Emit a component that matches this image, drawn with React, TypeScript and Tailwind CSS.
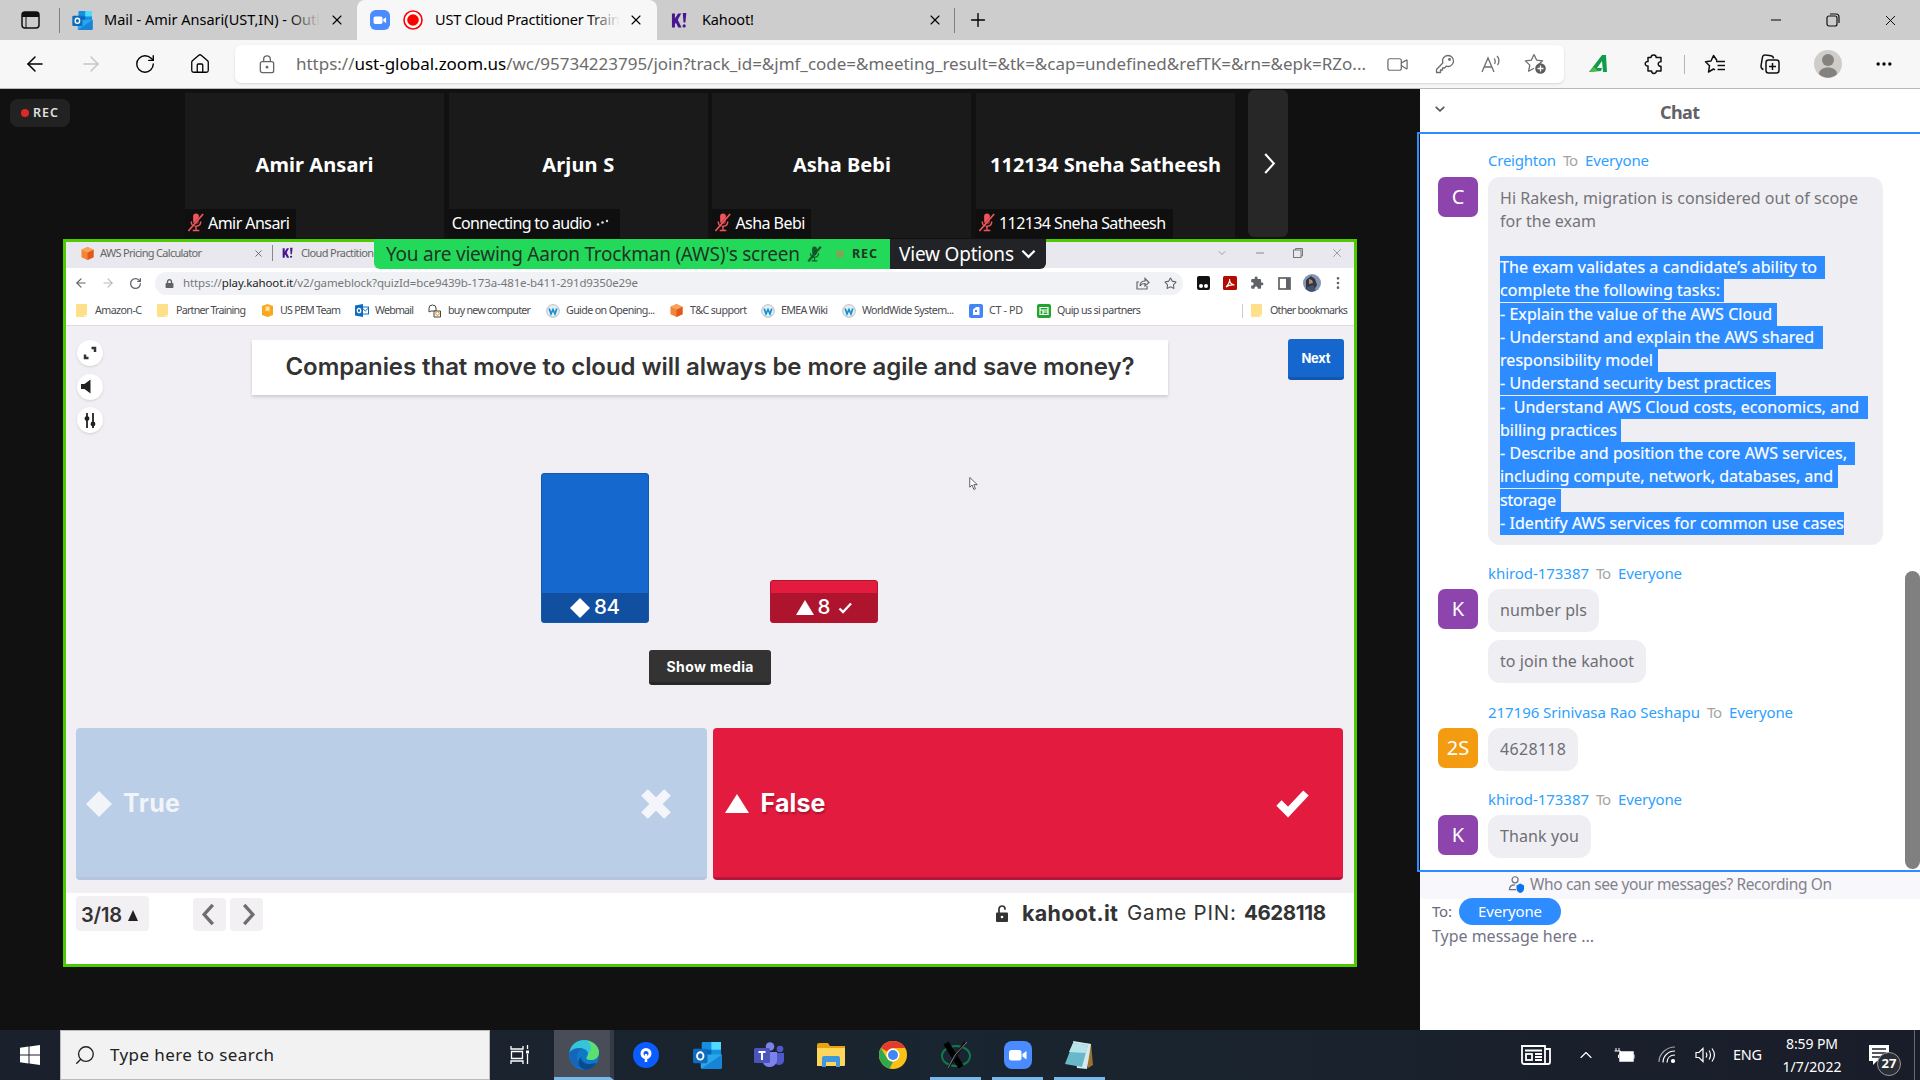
import React, { useLayoutEffect, useRef, useState } from "react";
import {
  ArrowLeft, ArrowRight, RotateCw, Home, Plus, X, Minus, Video, ChevronDown, ChevronUp,
  MoreHorizontal, MoreVertical, Star, Search,
} from "lucide-react";
import { FaLock } from "react-icons/fa";
import { MdExtension } from "react-icons/md";

const NOTO = "font-['Noto_Sans','Open_Sans',sans-serif]";
const GEO = "font-['Inter','Noto_Sans',sans-serif]";

/* Single line of text whose tracking is adjusted so that it spans `w` pixels. */
function Fit({ w, className = "", children }: { w: number; className?: string; children: React.ReactNode }) {
  const ref = useRef<HTMLSpanElement>(null);
  const [spacing, setSpacing] = useState(0);
  useLayoutEffect(() => {
    const el = ref.current;
    if (!el) return;
    const count = Math.max(1, (el.textContent || "").length - 1);
    el.style.letterSpacing = "0px";
    const next = (w - el.getBoundingClientRect().width) / count;
    el.style.letterSpacing = next + "px";
    setSpacing(next);
  }, [w]);
  return (
    <span className={`block shrink-0 ${className}`} style={{ width: w }}>
      <span ref={ref} className="inline-block whitespace-pre" style={{ letterSpacing: spacing }}>{children}</span>
    </span>
  );
}

const OutlookIcon = ({ className = "" }: { className?: string }) => (
  <svg viewBox="0 0 30 28" className={`shrink-0 ${className}`}>
    <rect x="9" y="0" width="20" height="15" rx="1.5" fill="#1490df" />
    <rect x="19" y="0" width="10" height="8" fill="#50d9ff" />
    <rect x="9" y="8" width="10" height="8" fill="#0364b8" />
    <path d="M8 13h22v13a2 2 0 0 1-2 2H10a2 2 0 0 1-2-2z" fill="#28a8ea" />
    <path d="M8 28L30 13v13a2 2 0 0 1-2 2z" fill="#1784d8" />
    <rect x="0" y="7" width="15" height="15" rx="1.5" fill="#0f6cbd" />
    <ellipse cx="7.5" cy="14.5" rx="3.3" ry="3.8" fill="none" stroke="#fff" strokeWidth="2" />
  </svg>
);
const ZoomIcon = ({ className = "" }: { className?: string }) => (
  <svg viewBox="0 0 28 28" className={`shrink-0 ${className}`}>
    <rect width="28" height="28" rx="8" fill="#4a8cff" />
    <rect x="5" y="9" width="12.500" height="10.500" rx="2.500" fill="#fff" />
    <path d="M18.500 13l4-3v8.500l-4-3z" fill="#fff" />
  </svg>
);
const KahootK = ({ className = "" }: { className?: string }) => (
  <svg viewBox="0 0 17 18" className={`shrink-0 ${className}`}>
    <path d="M1 1.500h3.200v5.500l3.300-5.500h3.400L7.200 8.300l4 8.200H7.700L5.200 11.500l-1 1.500v3.500H1z" fill="#46178f" />
    <path d="M12.500 1h3.800l-1 10h-2z" fill="#46178f" />
    <circle cx="14" cy="14.800" r="1.700" fill="#46178f" />
  </svg>
);
const Cube = ({ className = "" }: { className?: string }) => (
  <svg viewBox="0 0 14 14" className={`shrink-0 ${className}`}>
    <path d="M7 0l6.500 3v8L7 14 .5 11V3z" fill="#f58536" />
    <path d="M7 6v8l6.500-3V3z" fill="#e0591b" />
    <path d="M7 0l6.500 3L7 6 .5 3z" fill="#f9a35a" />
  </svg>
);
const Folder = ({ className = "" }: { className?: string }) => (
  <svg viewBox="0 0 11 13" className={`shrink-0 ${className}`}>
    <path d="M0 1a1 1 0 0 1 1-1h9a1 1 0 0 1 1 1v12H1a1 1 0 0 1-1-1z" fill="#ffe08a" />
    <path d="M9 11h2v2H8z" fill="#fff3cd" />
  </svg>
);
const Box = ({ className = "" }: { className?: string }) => (
  <svg viewBox="0 0 13 13" className={`shrink-0 ${className}`}>
    <path d="M1 2l5.500-2L12 2v9l-5.500 2L1 11z" fill="#f7a81b" />
    <path d="M4.500 2.500h4v5l-2-1-2 1z" fill="#ffe2a6" />
  </svg>
);
const WikiW = ({ className = "" }: { className?: string }) => (
  <svg viewBox="0 0 14 14" className={`shrink-0 ${className}`}>
    <circle cx="7" cy="7" r="6.300" fill="#e8eef2" stroke="#b5bcc2" />
    <path d="M3.200 4.500l1.800 5.500 2-4.500 2 4.500 1.800-5.500" fill="none" stroke="#1390cf" strokeWidth="1.700" />
  </svg>
);
const WebmailIcon = ({ className = "" }: { className?: string }) => (
  <svg viewBox="0 0 14 13" className={`shrink-0 ${className}`}>
    <rect x="7" y="3" width="6.500" height="7" fill="#fff" stroke="#0f6cbd" />
    <path d="M7 4l3.300 3L13.500 4" fill="none" stroke="#0f6cbd" />
    <path d="M0 1.500L8 0v13l-8-1.500z" fill="#0f6cbd" />
    <ellipse cx="4" cy="6.500" rx="1.700" ry="2.200" fill="none" stroke="#fff" strokeWidth="1.300" />
  </svg>
);
const ShopIcon = ({ className = "" }: { className?: string }) => (
  <svg viewBox="0 0 14 14" className={`shrink-0 ${className}`} fill="none" stroke="#444">
    <path d="M1 4a3.500 3 0 0 1 7 0v3H3l-2 1z" />
    <path d="M6 7h6.500v6H6z" fill="#fff" />
    <circle cx="9.500" cy="9.500" r="1.800" stroke="#e58a1f" />
  </svg>
);
const DocIcon = ({ className = "" }: { className?: string }) => (
  <svg viewBox="0 0 14 14" className={`shrink-0 ${className}`}>
    <rect width="14" height="14" rx="2" fill="#4285f4" />
    <path d="M4 5.500L7 3h3.500v8H4z" fill="#fff" /><path d="M6 6h2v2H6z" fill="#4285f4" />
  </svg>
);
const SheetIcon = ({ className = "" }: { className?: string }) => (
  <svg viewBox="0 0 14 14" className={`shrink-0 ${className}`}>
    <rect width="14" height="14" rx="2" fill="#22a52f" />
    <path d="M3 3.500h8v7H3zM3 6h8M6 6v4.500M6 8h5" fill="none" stroke="#fff" strokeWidth="1.200" />
  </svg>
);
const MutedMic = ({ className = "", color = "#f0555a" }: { className?: string; color?: string }) => (
  <svg viewBox="0 0 18 20" className={`shrink-0 ${className}`}>
    <rect x="6" y="0.500" width="6" height="11" rx="3" fill={color} />
    <path d="M4 9c0 3 2 5 5 5s5-2 5-5M9 14v4M5.500 18.500h7" fill="none" stroke={color} strokeWidth="1.500" />
    <path d="M17 1L1.500 19" stroke="#151515" strokeWidth="3" opacity="0.500" />
    <path d="M16.500 1L1 19" stroke={color} strokeWidth="1.800" />
  </svg>
);

function BrowserTabs() {
  return (
    <div className="flex h-10 items-center bg-[#cdcdcd] text-black">
      <svg viewBox="0 0 19 18" className="ml-[21px] h-[18px] w-[19px] shrink-0">
        <rect x="1" y="1" width="17" height="16" rx="3" fill="none" stroke="#111" strokeWidth="1.500" />
        <path d="M1 6V3a2 2 0 0 1 2-2h13a2 2 0 0 1 2 2v3z" fill="#111" />
        <path d="M5 6v11" stroke="#111" />
      </svg>
      <div className="ml-[19px] h-[25px] w-px bg-[#808080]" />
      <OutlookIcon className="ml-3 h-[19px] w-[21px]" />
      <div className="relative ml-[11px] w-[216px] shrink-0 overflow-hidden">
        <Fit w={216} className="text-[14.500px]">Mail - Amir Ansari(UST,IN) - Outl</Fit>
        <div className="absolute inset-y-0 right-0 w-8 bg-linear-to-r from-transparent to-[#cdcdcd]" />
      </div>
      <X className="ml-[9px] size-4 shrink-0" strokeWidth={1.7} />
      <div className="ml-3 flex h-full w-[300px] shrink-0 items-center rounded-t-lg bg-[#f7f7f7]">
        <ZoomIcon className="ml-[13px] size-5" />
        <svg viewBox="0 0 20 20" className="ml-[13px] size-5 shrink-0">
          <circle cx="10" cy="10" r="9" fill="#fff" stroke="#f00" strokeWidth="1.600" />
          <circle cx="10" cy="10" r="5.800" fill="#f00" />
        </svg>
        <div className="relative ml-3 w-[185px] shrink-0 overflow-hidden">
          <Fit w={185} className="text-[14.500px]">UST Cloud Practitioner Train</Fit>
          <div className="absolute inset-y-0 right-0 w-8 bg-linear-to-r from-transparent to-[#f7f7f7]" />
        </div>
        <X className="ml-2 size-4 shrink-0" strokeWidth={1.7} />
      </div>
      <KahootK className="ml-[14px] h-[17px] w-4" />
      <Fit w={52} className="ml-[15px] text-[14.500px]">Kahoot!</Fit>
      <X className="ml-[173px] size-4 shrink-0" strokeWidth={1.7} />
      <div className="ml-[11px] h-[25px] w-px bg-[#808080]" />
      <Plus className="ml-[12px] size-[22px]" strokeWidth={1.5} />
      <div className="ml-auto mr-[21px] flex items-center gap-[41px]">
        <Minus className="size-4" strokeWidth={1.5} />
        <svg viewBox="0 0 16 16" className="size-4" fill="none" stroke="#111" strokeWidth="1.200">
          <rect x="2" y="4" width="10" height="10" rx="2" /><path d="M5 2h6a3 3 0 0 1 3 3v6" />
        </svg>
        <X className="size-[17px]" strokeWidth={1.3} />
      </div>
    </div>
  );
}

function AddressBar() {
  return (
    <div className="flex h-[49px] items-center border-b border-[#b9b9b9] bg-[#f7f7f7]">
      <ArrowLeft className="ml-[23px] size-6" strokeWidth={1.5} />
      <ArrowRight className="ml-8 size-6 text-[#c6c6c6]" strokeWidth={1.5} />
      <RotateCw className="ml-[31px] size-[22px]" strokeWidth={1.5} />
      <Home className="ml-[33px] size-[22px]" strokeWidth={1.4} />
      <div className="ml-[24px] flex h-[38px] w-[1329px] shrink-0 items-center rounded-md bg-white text-[#6c6c6c] shadow-sm">
        <svg viewBox="0 0 16 20" className="ml-[24px] h-[19px] w-4 shrink-0" fill="none" stroke="#666" strokeWidth="1.400">
          <rect x="1" y="7" width="14" height="11.500" rx="2" /><path d="M4.500 7V4.500a3.500 3.500 0 0 1 7 0V7" /><circle cx="8" cy="12.800" r="0.800" fill="#555" />
        </svg>
        <Fit w={1070} className="ml-[21px] text-[17px]">https://<span className="text-black">ust-global.zoom.us</span>/wc/95734223795/join?track_id=&amp;jmf_code=&amp;meeting_result=&amp;tk=&amp;cap=undefined&amp;refTK=&amp;rn=&amp;epk=RZo...</Fit>
        <Video className="ml-[20px] size-[23px] shrink-0" strokeWidth={1.3} />
        <svg viewBox="0 0 20 20" className="ml-[26px] size-5 shrink-0" fill="none" stroke="#6c6c6c" strokeWidth="1.300" strokeLinejoin="round">
          <path d="M13 1.500a5.500 5.500 0 1 1-1.800 10.700L9.500 14H7.500v2H5.500v2.500h-4V15.500L7.800 9A5.500 5.500 0 0 1 13 1.500z" /><circle cx="14.500" cy="5.500" r="0.800" fill="#6c6c6c" />
        </svg>
        <svg viewBox="0 0 22 20" className="ml-[25px] h-5 w-[22px] shrink-0" fill="none" stroke="#6c6c6c" strokeWidth="1.300">
          <path d="M2 18L8 4l6 14M4.500 13h7M14 4.500c1.500 1 1.500 4 .5 5.500M17 2c2.500 2.500 2.500 6.500.5 9" />
        </svg>
        <svg viewBox="0 0 23 22" className="ml-[22px] h-[22px] w-[23px] shrink-0" fill="none" stroke="#6c6c6c" strokeWidth="1.300">
          <path d="M10 1.500l2.600 5.600 6 .7-4.500 4.100M10 1.500L7.400 7.100l-6 .8 4.400 4.200-1.200 6.100L10 15.200" strokeLinejoin="round" />
          <circle cx="16.500" cy="15.500" r="5.300" fill="#5c5c5c" stroke="none" /><path d="M16.500 12.500v6M13.500 15.500h6" stroke="#fff" />
        </svg>
      </div>
      <svg viewBox="0 0 20 20" className="ml-[24px] h-5 w-5 shrink-0">
        <path d="M1 18L14 1l4 0 1 17h-4l-1-11-5 7h5l-1 3z" fill="#109c4a" /><path d="M1 18l5-5 4 4z" fill="#56b947" />
      </svg>
      <svg viewBox="0 0 22 22" className="ml-[36px] size-[22px] shrink-0" fill="none" stroke="#111" strokeWidth="1.500" strokeLinejoin="round">
        <path d="M7 4.500a2.600 2.600 0 0 1 5.200 0H17v4.300a2.300 2.300 0 1 0 0 4.500V18h-4.600a2.400 2.400 0 1 1-4.800 0H4v-5a2.300 2.300 0 1 1 0-4.500v-4z" />
      </svg>
      <div className="ml-[18px] h-[19px] w-px bg-[#b5b5b5]" />
      <svg viewBox="0 0 22 20" className="ml-[19px] h-5 w-[22px] shrink-0" fill="none" stroke="#111" strokeWidth="1.500" strokeLinejoin="round">
        <path d="M13 6.500L9.500 1.500 7 7l-5.500.8 4 4L4.500 18 9.500 15l1.500.8M12 7.500h9M13.500 11.500H21M13.500 15.500H21" />
      </svg>
      <svg viewBox="0 0 22 22" className="ml-[33px] size-[22px] shrink-0" fill="none" stroke="#111" strokeWidth="1.500">
        <rect x="7" y="7" width="13" height="13" rx="2.500" /><path d="M13.500 10v7M10 13.500h7M4.500 16.500c-2-.5-2.500-2-2.500-3.500L3.500 4A2.500 2.500 0 0 1 6.500 2l5.500.8c1.500.3 2.500 1.500 2.500 2.700" />
      </svg>
      <svg viewBox="0 0 28 28" className="ml-[33px] size-7 shrink-0">
        <circle cx="14" cy="14" r="14" fill="#cfcdca" /><circle cx="14" cy="10" r="6" fill="#85817e" /><path d="M5 24c0-4 4-6.500 9-6.500s9 2.500 9 6.500c-5 5-13 5-18 0z" fill="#85817e" />
      </svg>
      <MoreHorizontal className="ml-[32px] size-5" strokeWidth={2} />
    </div>
  );
}

function Tile({ name, w, label, labelW, labelBox, muted = true }: { name: string; w: number; label: string; labelW: number; labelBox: string; muted?: boolean }) {
  return (
    <div className="flex h-[145px] w-[259px] shrink-0 flex-col bg-[#1a1a1a] text-white">
      <div className="flex h-[116px] items-end justify-center pb-[29px]">
        <Fit w={w} className="text-[20px] leading-[30px] font-bold">{name}</Fit>
      </div>
      <div className={`flex h-[29px] items-center bg-[#0f0f0f] pb-0.5 ${labelBox}`}>
        {muted ? <MutedMic className="mr-[3px] ml-0.5 h-[19px] w-[18px]" /> : <span className="w-[3px]" />}
        <Fit w={labelW} className="text-[16px]">{label}</Fit>
        {!muted && (
          <svg viewBox="0 0 14 8" className="ml-1 h-2 w-3.5" fill="#ddd"><circle cx="2" cy="5.500" r="1.300" /><circle cx="6.500" cy="3.500" r="1.300" /><circle cx="11" cy="2" r="1.200" /></svg>
        )}
      </div>
    </div>
  );
}

function Participants() {
  return (
    <div className="flex h-[150px] items-start">
      <div className="mt-[10px] ml-[10px] flex h-7 w-[60px] shrink-0 items-center rounded-lg bg-[#222] pl-[11px] text-[#e0e0e0]">
        <span className="mr-1 size-2 rounded-full bg-[#e02828]" />
        <Fit w={25} className="text-[12.500px] font-semibold">REC</Fit>
      </div>
      <div className="mt-1 ml-[115px] flex gap-[4.700px]">
        <Tile name="Amir Ansari" w={118} label="Amir Ansari" labelW={82} labelBox="w-[111px]" />
        <Tile name="Arjun S" w={72} label="Connecting to audio" labelW={140} labelBox="w-[171px]" muted={false} />
        <Tile name="Asha Bebi" w={98} label="Asha Bebi" labelW={70} labelBox="w-[99px]" />
        <Tile name="112134 Sneha Satheesh" w={231} label="112134 Sneha Satheesh" labelW={167} labelBox="w-[197px]" />
      </div>
      <div className="mt-px ml-[13px] flex h-[147px] w-10 items-center justify-center rounded-md bg-[#272727] text-white">
        <svg viewBox="0 0 12 22" className="ml-1 h-[21px] w-3"><path d="M1 1l9 10-9 10" fill="none" stroke="#fff" strokeWidth="2.200" /></svg>
      </div>
    </div>
  );
}

function SharedChrome() {
  return (
    <>
      <div className="flex h-[26px] items-center bg-[#e8e8ee] pb-1 text-[#666]">
        <Cube className="ml-[15px] h-[13px] w-[13px]" />
        <Fit w={102} className="ml-[6px] text-[11px]">AWS Pricing Calculator</Fit>
        <X className="ml-[51px] size-[11px] shrink-0" />
        <div className="ml-2 h-4 w-px bg-[#888]" />
        <KahootK className="ml-[9px] h-3 w-[11px]" />
        <Fit w={73} className="ml-[8px] text-[11px]">Cloud Practition</Fit>
        <div className="ml-auto mr-[10px] flex items-center gap-[26px] text-[#888]">
          <ChevronDown className="size-3" strokeWidth={1.5} />
          <Minus className="size-3" />
          <svg viewBox="0 0 12 12" className="size-3" fill="none" stroke="#777"><rect x="1.500" y="3" width="7.500" height="7.500" /><path d="M3.500 3V1.500h7V9H9" /></svg>
          <X className="size-[14px]" strokeWidth={1.3} />
        </div>
      </div>
      <div className="flex h-[30px] items-center bg-white text-[#5f6368]">
        <ArrowLeft className="ml-[8px] size-[14px]" />
        <ArrowRight className="ml-[13px] size-[14px] text-[#bbb]" />
        <RotateCw className="ml-[14px] size-[13px]" strokeWidth={2.3} />
        <div className="ml-[13px] flex h-[23px] w-[1028px] shrink-0 items-center rounded-full bg-[#f1f2f6]">
          <FaLock className="ml-[10px] size-[9px] shrink-0" />
          <Fit w={455} className="ml-[9px] text-[11.500px] text-[#777]">https://<span className="text-[#222]">play.kahoot.it</span>/v2/gameblock?quizId=bce9439b-173a-481e-b411-291d9350e29e</Fit>
          <svg viewBox="0 0 14 13" className="mr-3.5 ml-auto h-[13px] w-3.5" fill="none" stroke="#666" strokeWidth="1.200">
            <path d="M3 5H1v7h10V9M4 9c0-3.500 2-5 5-5V1.500l4 4-4 3.500V6.500C7 6.500 5 7 4 9z" />
          </svg>
          <Star className="mr-1.5 size-[13px]" strokeWidth={2} />
        </div>
        <svg viewBox="0 0 13 14" className="ml-[14px] h-3.5 w-[13px] shrink-0"><rect width="13" height="14" rx="2" fill="#111" /><circle cx="4" cy="10" r="2" fill="#fff" /><circle cx="9" cy="10" r="2" fill="#fff" /></svg>
        <svg viewBox="0 0 14 14" className="ml-[13px] size-3.5 shrink-0"><rect width="14" height="14" rx="1.500" fill="#b30b00" /><path d="M3 11c2-2 4-5.500 3.500-8 0 4 2 5.500 5 6-3-.5-6 .3-8.500 2z" fill="none" stroke="#fff" strokeWidth="1.100" /></svg>
        <MdExtension className="ml-[13px] size-[14px] shrink-0" />
        <svg viewBox="0 0 13 13" className="ml-[14px] size-[13px] shrink-0"><rect x="1" y="1" width="11" height="11" fill="#fff" stroke="#5f6368" strokeWidth="1.700" /><path d="M8 1h4v11H8z" fill="#5f6368" /></svg>
        <svg viewBox="0 0 18 18" className="ml-[12px] size-[18px] shrink-0"><circle cx="9" cy="9" r="9" fill="#8595b5" /><path d="M3 6l5-4 4 3 2 6-3 5-8-1z" fill="#35363e" /><path d="M6 5l3 1 1 3-4 1z" fill="#a98d80" /><path d="M2 14l8-3 3 5c-4 3-8 2-11-2z" fill="#42536e" /></svg>
        <MoreVertical className="ml-[9px] size-4" />
      </div>
      <div className="flex h-[28px] items-center border-b border-[#dcdcde] bg-white pb-0.5 text-[10.700px] text-[#4a4a50]">
        <Folder className="ml-[10px] h-[13px] w-[11px]" /><Fit w={47} className="ml-2">Amazon-C</Fit>
        <Folder className="ml-[15px] h-[13px] w-[11px]" /><Fit w={70} className="ml-2">Partner Training</Fit>
        <Box className="ml-[15px] size-[13px]" /><Fit w={61} className="ml-[6px]">US PEM Team</Fit>
        <WebmailIcon className="ml-[14px] h-[13px] w-[14px]" /><Fit w={39} className="ml-[6px]">Webmail</Fit>
        <ShopIcon className="ml-[14px] size-[14px]" /><Fit w={83} className="ml-[6px]">buy new computer</Fit>
        <WikiW className="ml-[15px] size-[14px]" /><Fit w={89} className="ml-[6px]">Guide on Opening...</Fit>
        <Cube className="ml-[15px] size-[13px]" /><Fit w={57} className="ml-[7px]">T&amp;C support</Fit>
        <WikiW className="ml-[14px] size-[14px]" /><Fit w={47} className="ml-[6px]">EMEA Wiki</Fit>
        <WikiW className="ml-[14px] size-[14px]" /><Fit w={92} className="ml-[6px]">WorldWide System...</Fit>
        <DocIcon className="ml-[15px] size-[14px]" /><Fit w={34} className="ml-[6px]">CT - PD</Fit>
        <SheetIcon className="ml-[14px] size-[14px]" /><Fit w={84} className="ml-[6px]">Quip us si partners</Fit>
        <div className="ml-auto h-[14px] w-px bg-[#ccc]" />
        <Folder className="ml-2 h-[13px] w-[11px]" /><Fit w={78} className="mr-[6px] ml-2">Other bookmarks</Fit>
      </div>
    </>
  );
}

function Quiz() {
  return (
    <div className={`${GEO}`}>
      <div className="flex h-[567px] flex-col bg-[#f1eff3]">
        <div className="flex h-[104px] items-start">
          <div className="mt-[14px] ml-[11px] flex flex-col gap-[7.500px] text-[#333]">
            <div className="grid size-[26px] place-items-center rounded-full bg-white shadow">
              <svg viewBox="0 0 14 14" className="size-3.5" fill="none" stroke="#333" strokeWidth="2.500"><path d="M8.500 2H12v4M5.500 12H2V8.500" /></svg>
            </div>
            <div className="grid size-[26px] place-items-center rounded-full bg-white shadow">
              <svg viewBox="0 0 10 14" className="mr-2 h-[15px] w-2.5" fill="#222"><path d="M0 4.500h3.500L9.500 0v14L3.500 9.500H0z" /></svg>
            </div>
            <div className="grid size-[26px] place-items-center rounded-full bg-white shadow">
              <svg viewBox="0 0 12 15" className="h-[15px] w-3" fill="#222" stroke="#222" strokeWidth="1.800"><path d="M3 0v15M9 0v15" /><circle cx="3" cy="5.500" r="1.500" /><circle cx="9" cy="11" r="1.500" /></svg>
            </div>
          </div>
          <div className="mt-[14px] ml-[149px] flex h-[55px] w-[916px] items-center justify-center bg-white pb-px text-[#333] shadow-[0_2px_3px_rgba(0,0,0,0.15)]">
            <Fit w={849} className="text-[24px] font-semibold">Companies that move to cloud will always be more agile and save money?</Fit>
          </div>
          <div className="mt-[13px] ml-[120px] flex h-[41px] w-[56px] items-center justify-center rounded-[3px] border-b-[3px] border-[#1157af] bg-[#1567cd] pt-0.5 text-white">
            <Fit w={29} className="text-[13px] font-bold">Next</Fit>
          </div>
        </div>

        <div className="relative mt-[43px] flex h-[150px] items-end">
          <div className="ml-[475px] flex h-[150px] w-[108px] flex-col rounded-[3px] border border-[#1158ae] bg-[#1568ce]">
            <div className="mt-auto flex h-[29px] items-center justify-center bg-[#114fa0] text-white">
              <svg viewBox="0 0 20 20" className="size-5" fill="#fff"><path d="M10 0l10 10-10 10L0 10z" /></svg>
              <Fit w={26} className="ml-1 text-[20.500px] font-medium">84</Fit>
            </div>
          </div>
          <div className="ml-[121px] flex h-[43px] w-[108px] flex-col rounded-[3px] border border-[#b0162f] bg-[#e21b3f]">
            <div className="mt-auto flex h-[29px] items-center justify-center bg-[#af142e] text-white">
              <svg viewBox="0 0 18 15" className="h-[15px] w-[18px]" fill="#fff"><path d="M9 0l9 15H0z" /></svg>
              <Fit w={13} className="ml-1 text-[20.500px] font-medium">8</Fit>
              <svg viewBox="0 0 15 12" className="ml-[7px] h-3 w-[15px]"><path d="M1.500 6.500L5 10l8-8.500" fill="none" stroke="#fff" strokeWidth="2.300" /></svg>
            </div>
          </div>
          <svg viewBox="0 0 12 18" className="absolute top-[3px] left-[903px] h-[15px] w-[9px]"><path d="M1 1v13l3-3 2.500 6 2-1L6.500 10.500H11z" fill="#fff" stroke="#333" /></svg>
        </div>

        <div className="mt-[27px] ml-[583px] flex h-[35px] w-[122px] items-center justify-center rounded-[3px] border-b-[3px] border-[#272727] bg-[#333] text-white">
          <Fit w={87} className="text-[14px] font-bold">Show media</Fit>
        </div>

        <div className="mt-[43px] ml-[10px] flex gap-[6px] text-white">
          <div className="flex h-[152px] w-[630.500px] items-center rounded-[4px] border-b-[3px] border-[#b6c5dd] bg-[#bbcee7] pt-0.5">
            <svg viewBox="0 0 26 26" className="ml-[10px] size-[26px]" fill="#f1f4f9"><path d="M13 0l13 13-13 13L0 13z" /></svg>
            <Fit w={57} className="ml-[11px] text-[25px] font-bold text-[#f1f4f9]">True</Fit>
            <svg viewBox="0 0 30 30" className="mr-[36px] ml-auto size-[30px]" fill="none" stroke="#f3f5fa" strokeWidth="9.500"><path d="M3.500 3.500l23 23M26.500 3.500l-23 23" /></svg>
          </div>
          <div className="flex h-[152px] w-[630.500px] items-center rounded-[4px] border-b-[3px] border-[#b5173a] bg-[#e21b3f] pt-0.5">
            <svg viewBox="0 0 24 19" className="ml-[12px] h-[19px] w-6" fill="#fff"><path d="M12 0l12 19H0z" /></svg>
            <Fit w={65} className="ml-[12px] text-[25px] font-bold [text-shadow:1px_2px_2px_rgba(0,0,0,0.25)]">False</Fit>
            <svg viewBox="0 0 33 28" className="mr-[34px] ml-auto h-7 w-[33px]" fill="none" stroke="#fff" strokeWidth="7.500"><path d="M3 13l9 9L30 3" /></svg>
          </div>
        </div>
      </div>

      <div className="flex h-[71px] items-start bg-white text-[#333]">
        <div className="mt-[3px] ml-[10px] flex h-[35px] w-[73px] items-center rounded bg-[#f2f0f3] pt-0.5 pl-[5px]">
          <Fit w={41} className="text-[20px] font-semibold">3/18</Fit>
          <svg viewBox="0 0 10 11" className="mt-0.5 ml-[6px] h-[11px] w-2.5" fill="#222"><path d="M5 0l5 11H0z" /></svg>
        </div>
        <div className="mt-[5px] ml-[44px] grid h-[33px] w-[33px] place-items-center rounded bg-[#f2f0f3]"><svg viewBox="0 0 14 24" className="mr-[3px] h-[23px] w-3.5" fill="none" stroke="#6e6e6e" strokeWidth="3.500"><path d="M12 2L3 12l9 10" /></svg></div>
        <div className="mt-[5px] ml-1 grid h-[33px] w-[33px] place-items-center rounded bg-[#f2f0f3]"><svg viewBox="0 0 14 24" className="ml-1 h-[23px] w-3.5" fill="none" stroke="#6e6e6e" strokeWidth="3.500"><path d="M2 2l9 10-9 10" /></svg></div>
        <div className="mt-[4px] mr-[28px] ml-auto flex h-[33px] items-center text-[20.500px]">
          <svg viewBox="0 0 12 17" className="h-[17px] w-3"><rect y="7.500" width="12" height="9.500" rx="1" fill="#333" /><path d="M3 8V4a3 3 0 0 1 6 0v.8" fill="none" stroke="#333" strokeWidth="1.700" /><circle cx="6" cy="12" r="1.300" fill="#fff" /></svg>
          <Fit w={96} className="ml-[14px] text-[21.500px] font-bold">kahoot.it</Fit>
          <Fit w={109} className="ml-[9px]">Game PIN:</Fit>
          <Fit w={82} className="ml-[8px] font-bold">4628118</Fit>
        </div>
      </div>
    </div>
  );
}

function SharedScreen() {
  return (
    <div className="relative ml-[63px] h-[728px] w-[1294px] border-[3px] border-[#4cc900] bg-white">
      <SharedChrome />
      <Quiz />
      <div className="absolute -top-[3px] left-[308px] flex h-[30px] items-center text-[20px]">
        <div className="flex h-full w-[516px] items-center rounded-bl-md bg-[#23d959] pl-3 text-[#203528]">
          <Fit w={414} className="text-[19px]">You are viewing Aaron Trockman (AWS)'s screen</Fit>
          <MutedMic className="ml-[6px] h-4 w-[17px]" color="#14592c" />
          <span className="ml-[13px] size-2 rounded-full bg-[#7fa653]" />
          <Fit w={25} className="ml-2 text-[12.500px] font-bold">REC</Fit>
        </div>
        <div className="flex h-full w-[156px] items-center rounded-br-md bg-[#222326] pl-[9px] text-white">
          <Fit w={115} className="text-[19px]">View Options</Fit>
          <svg viewBox="0 0 16 10" className="ml-[7px] h-2.5 w-[15px]"><path d="M1.500 1.500L8 8l6.500-6.500" fill="none" stroke="#fff" strokeWidth="2.400" /></svg>
        </div>
      </div>
    </div>
  );
}

const SELECTED: [string, string, number][] = [
  ["The exam validates a candidate’s ability to", "w-[325px]", 317],
  ["complete the following tasks:", "w-[224px]", 220],
  ["- Explain the value of the AWS Cloud", "w-[277px]", 272],
  ["- Understand and explain the AWS shared", "w-[323px]", 314],
  ["responsibility model", "w-[158px]", 153],
  ["- Understand security best practices", "w-[276px]", 271],
  ["-  Understand AWS Cloud costs, economics, and", "w-[368px]", 359],
  ["billing practices", "w-[121px]", 117],
  ["- Describe and position the core AWS services,", "w-[355px]", 347],
  ["including compute, network, databases, and", "w-[338px]", 333],
  ["storage", "w-[61px]", 56],
  ["- Identify AWS services for common use cases", "w-[344px]", 344],
];

function Sender({ name, w }: { name: string; w: number }) {
  return (
    <div className="flex h-5 items-center pb-0.5 pl-[50px] text-[15px] text-[#2d9fff]">
      <Fit w={w}>{name}</Fit>
      <Fit w={15} className="ml-[7px] text-[#a5a5a5]">To</Fit>
      <Fit w={64} className="ml-[7px]">Everyone</Fit>
    </div>
  );
}
const Avatar = ({ text, color = "bg-[#8e44ad]" }: { text: string; color?: string }) => (
  <div className={`flex size-10 shrink-0 items-center justify-center rounded-[7px] text-[20px] text-white ${color}`}>{text}</div>
);
const Bubble = ({ text, w }: { text: string; w: number }) => (
  <div className="flex h-[43px] w-fit items-center rounded-[12px] bg-[#efeef3] px-3 pb-0.5 text-[16px] text-[#6e6e75]"><Fit w={w}>{text}</Fit></div>
);

function Chat() {
  return (
    <div className="relative flex h-[941px] w-[500px] shrink-0 flex-col bg-white">
      <div className="flex h-[43px] items-center">
        <svg viewBox="0 0 10 6" className="-mt-1 ml-[15px] h-1.5 w-2.5"><path d="M.7.8L5 4.800 9.300.8" fill="none" stroke="#555" strokeWidth="1.600" /></svg>
        <Fit w={40} className="mt-1 ml-[215px] text-[18px] font-bold text-[#616166]">Chat</Fit>
      </div>
      <div className="-ml-[3px] flex h-[740px] w-[503px] border-y-2 border-l-2 border-[#2d8cff]">
        <div className="ml-px flex-1 pt-[17px] pl-[18px]">
          <Sender name="Creighton" w={68} />
          <div className="mt-[6px] flex gap-[10px]">
            <Avatar text="C" />
            <div className="h-[368px] w-[395px] rounded-[12px] bg-[#efeef3] pt-[10px] pl-3 text-[16px] leading-[23px] text-[#747478]">
              <Fit w={358} className="h-[23px]">Hi Rakesh, migration is considered out of scope</Fit>
              <Fit w={96} className="h-[23px]">for the exam</Fit>
              <div className="mt-[23px] flex flex-col gap-[0.270px] text-white">
                {SELECTED.map(([text, box, w]) => (
                  <div key={text} className={`h-[23px] bg-[#2d8cff] ${box}`}><Fit w={w} className="[-webkit-text-stroke:0.2px_white]">{text}</Fit></div>
                ))}
              </div>
            </div>
          </div>
          <div className="h-[19px]" />
          <Sender name="khirod-173387" w={101} />
          <div className="mt-[5px] flex gap-[10px]">
            <Avatar text="K" />
            <div className="flex flex-col gap-2"><Bubble text="number pls" w={87} /><Bubble text="to join the kahoot" w={134} /></div>
          </div>
          <div className="h-[20px]" />
          <Sender name="217196 Srinivasa Rao Seshapu" w={212} />
          <div className="mt-[5px] flex gap-[10px]"><Avatar text="2S" color="bg-[#f39c12]" /><Bubble text="4628118" w={66} /></div>
          <div className="h-[19px]" />
          <Sender name="khirod-173387" w={101} />
          <div className="mt-[5px] flex gap-[10px]"><Avatar text="K" /><Bubble text="Thank you" w={79} /></div>
        </div>
        <div className="mt-[437px] h-[298px] w-[15px] rounded-full bg-[#808080]" />
      </div>
      <div className="flex h-[27px] items-center bg-[#f7f7fc] pb-0.5 text-[#838389]">
        <svg viewBox="0 0 17 18" className="ml-[88px] h-[17px] w-[17px]"><circle cx="7" cy="4" r="3.200" fill="none" stroke="#6e6e80" strokeWidth="1.300" /><path d="M8 14.500H1c0-3.500 2.500-5 6-5" fill="none" stroke="#6e6e80" strokeWidth="1.300" /><path d="M12.500 8l4 2v3.500c0 2.500-2 4-4 4.500-2-.5-4-2-4-4.500V10z" fill="#0e72ed" /></svg>
        <Fit w={302} className="ml-[5px] text-[15.500px]">Who can see your messages? Recording On</Fit>
      </div>
      <div className="-mt-px flex h-[27px] items-center">
        <Fit w={20} className="ml-[12px] text-[15px] text-[#68687b]">To:</Fit>
        <div className="ml-[7px] flex h-[27px] w-[102px] items-center justify-center rounded-full bg-[#2d8cff] text-[15px] text-white"><Fit w={64}>Everyone</Fit></div>
      </div>
      <Fit w={162} className="-mt-px ml-[12px] text-[16px] text-[#747487]">Type message here ...</Fit>
    </div>
  );
}

function Taskbar() {
  return (
    <div className="flex h-[50px] items-center bg-linear-to-r from-[#1a202c] via-[#192530] to-[#191d29] text-white">
      <svg viewBox="0 0 20 20" className="ml-5 size-5 shrink-0" fill="#fff"><path d="M0 2.800L8.500 1.600V9.500H0zM9.500 1.500L20 0v9.500H9.500zM0 10.500h8.500v8L0 17.300zM9.500 10.500H20V20L9.500 18.500z" /></svg>
      <div className="ml-5 flex h-full w-[430px] shrink-0 items-center border border-[#bbb] bg-[#f2f2f2] text-[#222]">
        <Search className="ml-[13px] size-[22px] -scale-x-100" strokeWidth={1.5} />
        <Fit w={164} className="ml-[14px] text-[17px]">Type here to search</Fit>
      </div>
      <svg viewBox="0 0 20 20" className="ml-5 size-5 shrink-0" fill="none" stroke="#fff" strokeWidth="1.300"><path d="M1 1v3h12V1M1 19v-3h12v3M1.500 6.500h11v7h-11zM17.500 0v4M17.500 9v10" /><path d="M16 5.500h3v3h-3z" fill="#fff" stroke="none" /></svg>
      <div className="ml-6 flex h-full w-[60px] shrink-0 items-center border-r-4 border-b-[3px] border-r-[#343b44] border-b-[#76b9ed] bg-[#484d57] pt-[3px] pl-[15px]">
        <svg viewBox="0 0 30 30" className="size-[30px]">
          <circle cx="15" cy="15" r="15" fill="#0f78c8" />
          <path d="M.3 13C1.500 5 7.500 0 15 0c8.500 0 15 6 15 12.500 0 4.500-3.500 7.500-8 7.500-3 0-4.500-1-4.500-2s1.500-1.500 1.500-4c0-3.500-4-6-8.500-6C5.500 8 2 9.500.3 13z" fill="#36c5d8" />
          <path d="M18 .5C25 2 30 7 30 12.500c0 4.500-3.500 7.500-8 7.500-3 0-4.500-1-4.500-2s1.500-1.500 1.500-4c4-3 4-9-1-13.500z" fill="#5ddf70" />
          <path d="M12 9c-3 2-4 5-4 8 0 6 4 10 9 11-8 2-17-4-16.700-14C2.500 9 8 8 12 9z" fill="#1565b8" />
          <path d="M12 17c0 5 6 9 14 6 1 0 1.300.6.8 1.200C23 29 18 30.500 15 29.500c-6-2-7-9-3-12.500z" fill="#0b4a8f" />
        </svg>
      </div>
      <svg viewBox="0 0 26 26" className="ml-[19px] size-[26px] shrink-0"><circle cx="13" cy="13" r="13" fill="#0a5cff" /><circle cx="13" cy="11.500" r="4" fill="none" stroke="#fff" strokeWidth="3" /><path d="M13 12v8" stroke="#fff" strokeWidth="2.500" /></svg>
      <OutlookIcon className="ml-[34px] h-[27px] w-[29px]" />
      <svg viewBox="0 0 30 27" className="ml-[32px] h-[27px] w-[30px] shrink-0"><circle cx="26" cy="7" r="3.300" fill="#5059c9" /><circle cx="16" cy="4.500" r="4.300" fill="#7b83eb" /><path d="M21 11h9v7a5 5 0 0 1-9 3z" fill="#5059c9" /><path d="M9 10h14v9a7.500 7.500 0 0 1-14 2z" fill="#7b83eb" /><rect y="6" width="16" height="15" rx="1.500" fill="#4b53bc" /><path d="M4.500 10h7M8 10v8" stroke="#fff" strokeWidth="2" /></svg>
      <svg viewBox="0 0 28 24" className="ml-[33px] h-6 w-7 shrink-0"><path d="M0 2a2 2 0 0 1 2-2h9l2 3h15v8H0z" fill="#e8a20c" /><path d="M0 5h27a1 1 0 0 1 1 1v16a1 1 0 0 1-1 1H0z" fill="#ffd65c" /><path d="M5 24V15a2 2 0 0 1 2-2h14a2 2 0 0 1 2 2v9h-4v-5H9v5z" fill="#3f97dd" /></svg>
      <svg viewBox="0 0 28 28" className="ml-[34px] size-7 shrink-0"><circle cx="14" cy="14" r="14" fill="#fbc116" /><path d="M14 0a14 14 0 0 1 12.100 7H14a7 7 0 0 0-6 3.500L2 7A14 14 0 0 1 14 0z" fill="#e33b2e" /><path d="M2 7l6 10.500A7 7 0 0 0 14 21l-3.500 6.600A14 14 0 0 1 2 7z" fill="#2da94f" /><circle cx="14" cy="14" r="6.500" fill="#fff" /><circle cx="14" cy="14" r="5" fill="#4285f4" /></svg>
      <div className="ml-[23px] flex h-full w-[51px] shrink-0 items-center justify-center border-b-[3px] border-[#76b9ed] pt-[3px]">
        <svg viewBox="0 0 32 28" className="h-7 w-8" fill="none"><ellipse cx="16" cy="15" rx="14" ry="10" stroke="#117a4d" strokeWidth="2" /><path d="M6 2l15 24" stroke="#000" strokeWidth="6" /><path d="M25 1L8 27" stroke="#111" strokeWidth="2.500" /><path d="M27 1L15 14 8 27" stroke="#999" strokeWidth="0.800" /></svg>
      </div>
      <div className="ml-[11px] flex h-full w-[51px] shrink-0 items-center justify-center border-b-[3px] border-[#76b9ed] pt-[3px]"><ZoomIcon className="size-7" /></div>
      <div className="ml-[11px] flex h-full w-[51px] shrink-0 items-center justify-center border-b-[3px] border-[#76b9ed] pt-[3px] pr-0.5">
        <svg viewBox="0 0 28 28" className="size-7"><path d="M26 3l2 21-5 3-3-25z" fill="#9a742e" /><path d="M8 0l18 3-4 25-10-1z" fill="#d8e9ee" /><path d="M8 2l15 2-6 22L0 23z" fill="#69b8c9" /><path d="M8 2l15 2-2 8-17-1z" fill="#b7e4e9" /></svg>
      </div>

      <svg viewBox="0 0 30 20" className="ml-auto h-5 w-[30px] shrink-0" fill="none" stroke="#fff" strokeWidth="1.800"><path d="M1 1h23v18H3a2 2 0 0 1-2-2zM24 4h5v13a2 2 0 0 1-2 2h-4M4 5.500h17" /><rect x="5" y="9" width="6" height="6" /><path d="M14 9h7M14 12h7M14 15h7" /></svg>
      <ChevronUp className="ml-[25px] size-5" strokeWidth={1.4} />
      <svg viewBox="0 0 21 15" className="ml-[18px] h-[15px] w-[21px] shrink-0"><rect x="6" y="4" width="13" height="9" fill="#fff" stroke="#fff" strokeWidth="1.500" /><path d="M20 6.500v4M2 0v3M5 0v3M.5 3h6v2.500l-2 1.500v3" fill="none" stroke="#fff" /></svg>
      <svg viewBox="0 0 18 18" className="ml-[23px] size-[18px] shrink-0" fill="none" stroke="#fff" strokeWidth="1.200"><path d="M1 16C1 8 8 1 17 1" opacity="0.600" /><path d="M5 16.500C5 10 10 5 17 5M9 16.500C9 12 12 9 17 9" /><circle cx="15" cy="15" r="1.500" fill="#fff" /></svg>
      <svg viewBox="0 0 22 16" className="ml-[19px] h-4 w-[22px] shrink-0" fill="none" stroke="#fff" strokeWidth="1.200"><path d="M1 5.500h3l4-4v13l-4-4H1zM11 5.500c1 1.500 1 3.500 0 5M14 3.500c2 2.500 2 6.500 0 9M17 1.500c3 4 3 9 0 13" /></svg>
      <Fit w={29} className="ml-[16px] text-[14.500px]">ENG</Fit>
      <div className="ml-[20px] flex w-[60px] flex-col items-center gap-[3px] text-[14px] leading-5">
        <Fit w={52}>8:59 PM</Fit>
        <Fit w={59}>1/7/2022</Fit>
      </div>
      <div className="relative ml-[27px] h-5 w-5 shrink-0">
        <svg viewBox="0 0 20 20" className="size-5"><path d="M0 0h20v16H8l-4 4v-4H0z" fill="#fff" /><path d="M3 4h14M3 8h14M3 12h8" stroke="#1b202c" strokeWidth="1.500" /></svg>
        <div className="absolute top-[7px] left-[8px] flex size-6 items-center justify-center rounded-full border border-[#999] bg-[#2b2e35] text-[13px] font-bold">27</div>
      </div>
      <div className="ml-[25px] h-full w-px bg-[#666b73]" />
      <div className="w-[5px]" />
    </div>
  );
}

export default function App() {
  return (
    <div className={`h-[1080px] w-[1920px] overflow-hidden bg-[#111] ${NOTO}`}>
      <BrowserTabs />
      <AddressBar />
      <div className="flex h-[941px]">
        <div className="w-[1420px] shrink-0">
          <Participants />
          <SharedScreen />
        </div>
        <Chat />
      </div>
      <Taskbar />
    </div>
  );
}
